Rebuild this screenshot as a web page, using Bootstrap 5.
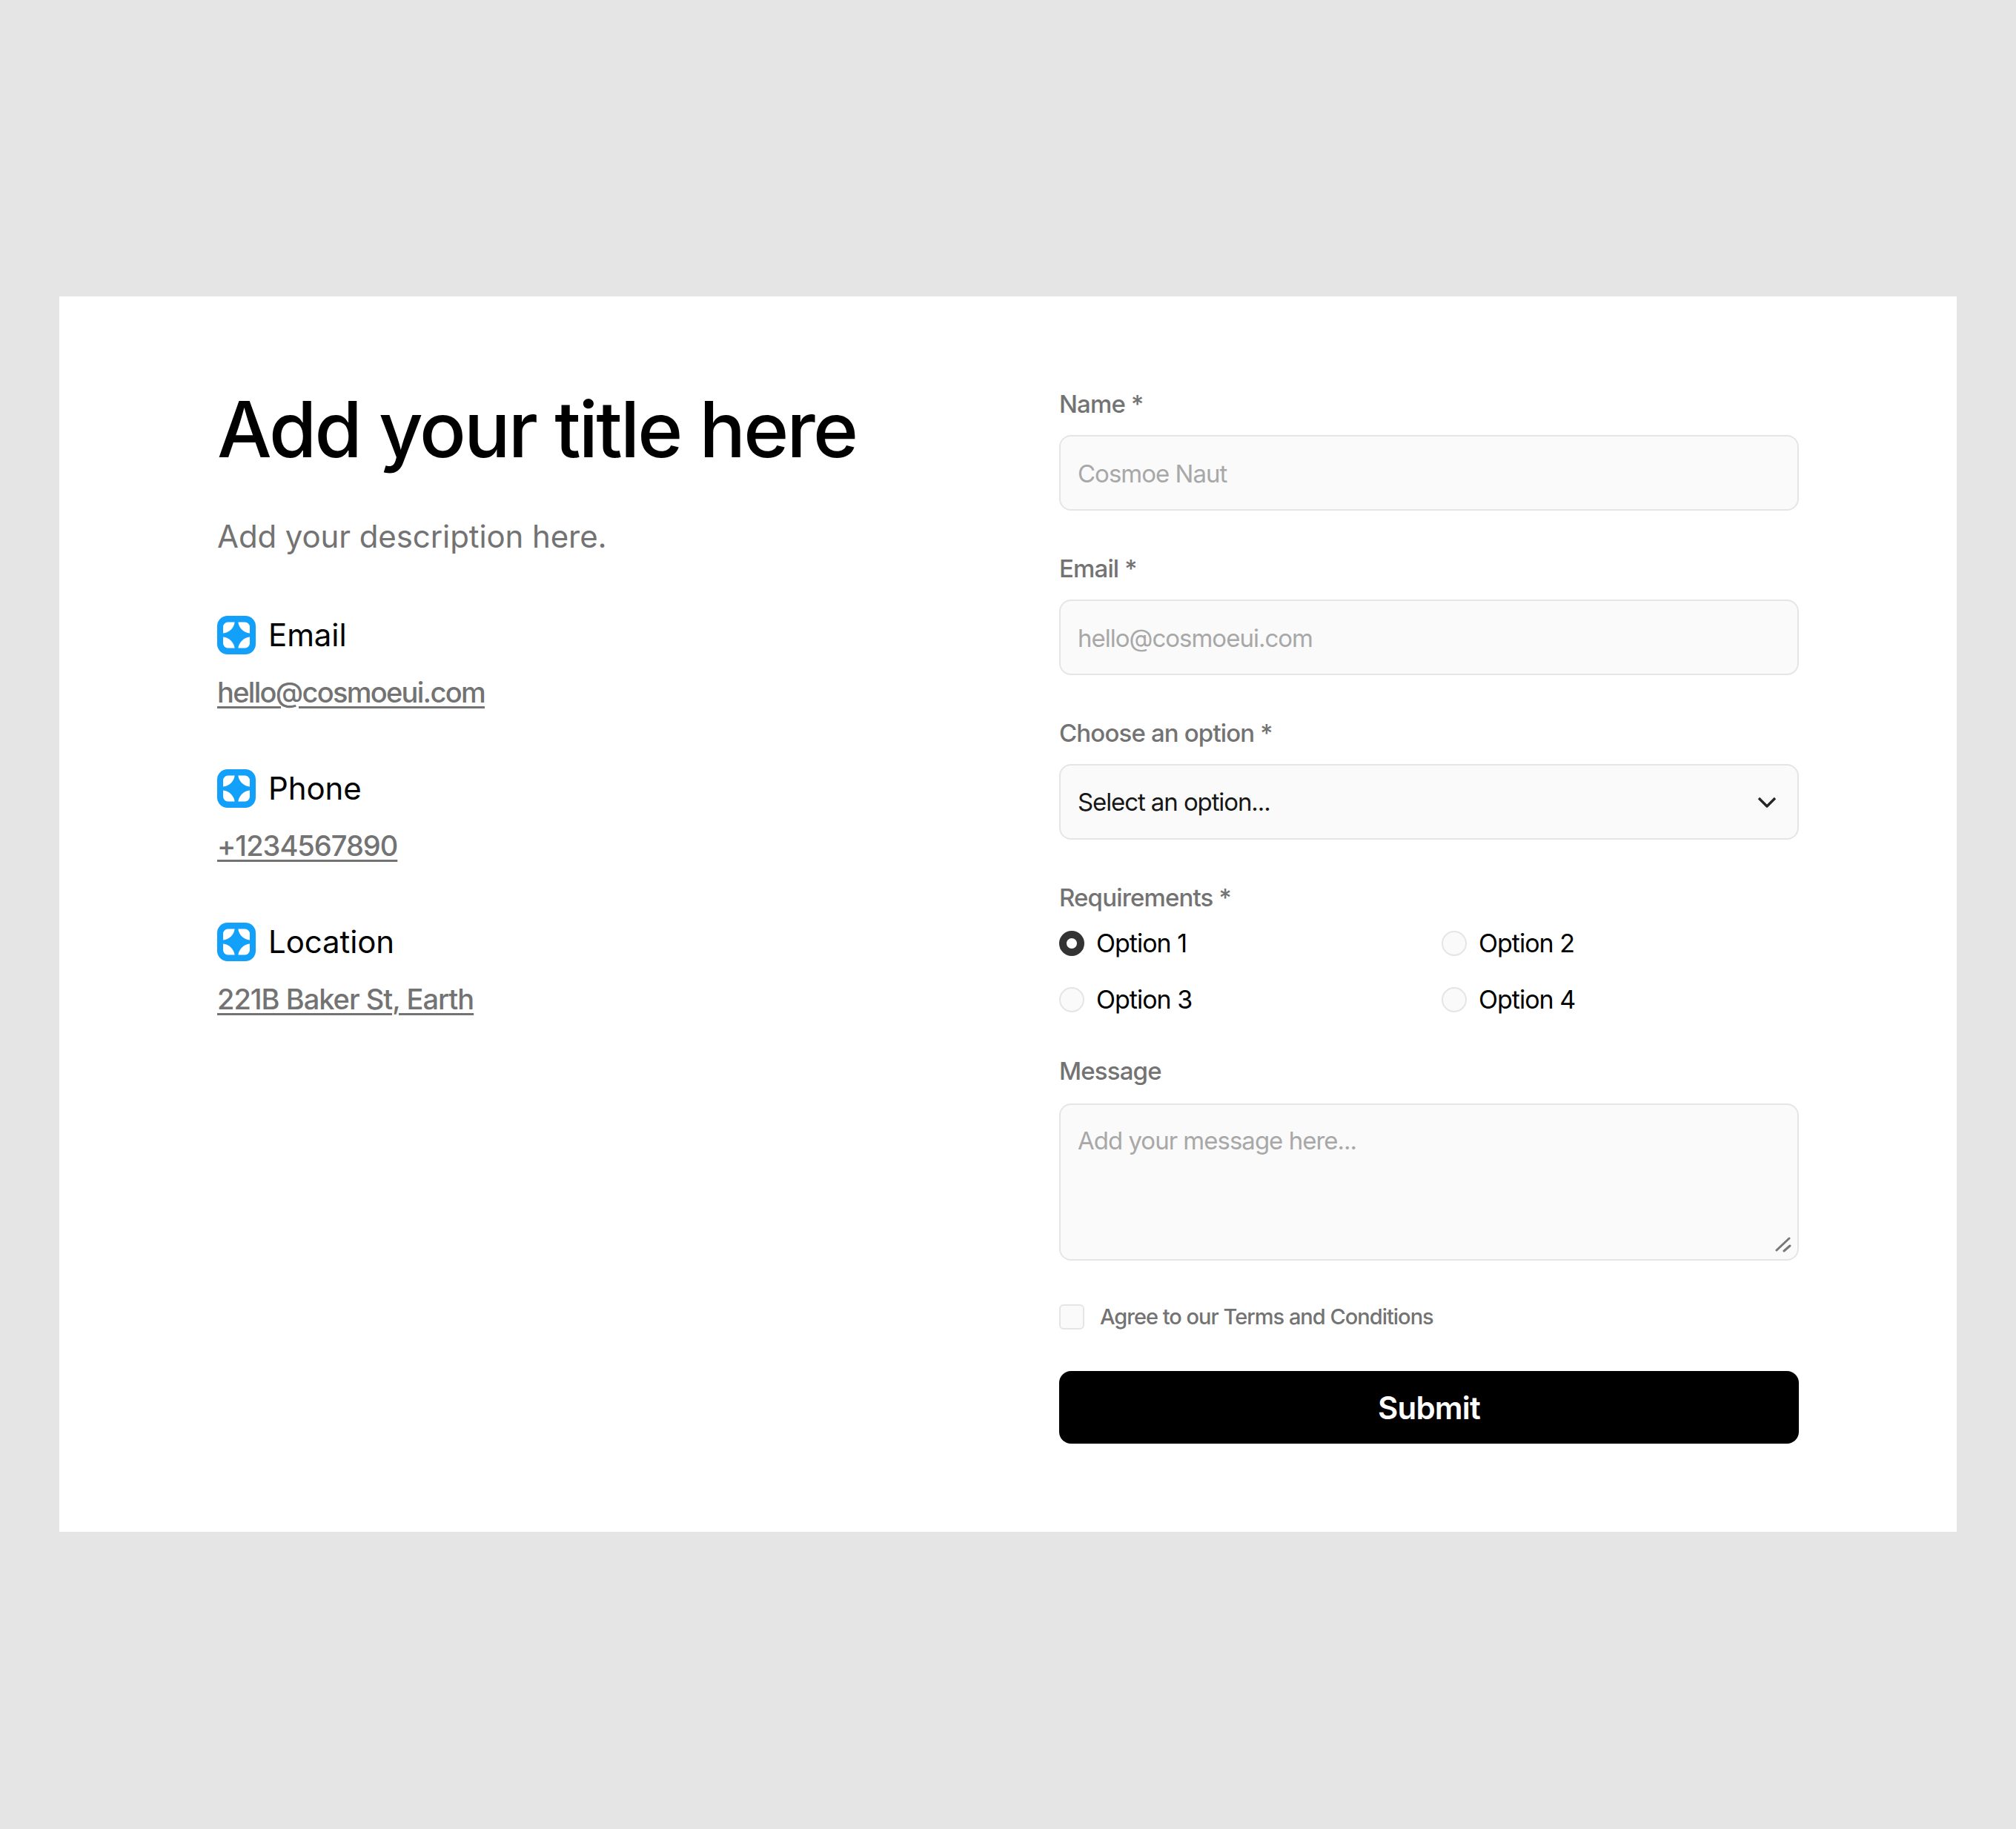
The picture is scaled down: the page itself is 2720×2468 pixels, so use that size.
<!doctype html>
<html lang="en"><head><meta charset="utf-8"><title>Contact</title>
<link href="https://cdn.jsdelivr.net/npm/bootstrap@5.3.0/dist/css/bootstrap.min.css" rel="stylesheet">
<style>
html,body{height:100%}
body{background:#e5e5e5;font-family:Inter,"Liberation Sans",sans-serif;color:#000;margin:0}
.page-wrap{height:2468px;padding:400px 80px 0}
.panel{background:#fff;height:1667px;padding:123px 213px 0 213px;display:flex}
.left-side{width:1136px;flex:none}
.right-side{width:998px;flex:none}
.big-title{font-size:104px;font-weight:500;line-height:120px;letter-spacing:-2.8px;margin:-4px 0 0}
.intro{font-size:42px;line-height:56px;color:#737373;margin:57px 0 0;letter-spacing:-.1px}
.info{margin-top:79px}
.info + .info{margin-top:78px}
.info-head{display:flex;align-items:center;gap:17px;font-size:42px;line-height:52px;letter-spacing:-.1px}
.info-head svg{width:52px;height:52px;flex:none}
.info-link{display:block;margin-top:25px;font-size:38px;font-weight:450;line-height:52px;color:#737373;text-decoration:underline;text-decoration-thickness:3px;text-underline-offset:5px;letter-spacing:-1px}
.info-link.mail-link{letter-spacing:-1.7px}
.fld{margin-bottom:56px}
.fld.req-group{margin-bottom:52px}
.fld-label{display:block;font-size:33px;font-weight:500;line-height:44px;color:#737373;margin-bottom:20px;letter-spacing:-.85px}
.fld-label.msg-label{margin-bottom:22px}
.form-control.inp,.form-select.inp{height:102px;background-color:#fafafa;border:2px solid #e5e5e5;border-radius:16px;font-size:33px;padding:2px 23px 0;color:#171717;box-shadow:none;letter-spacing:-1px}
.form-control.inp::placeholder{color:#a8a8a8}
.form-select.inp{background-size:30px;background-position:right 26px center;background-image:url("data:image/svg+xml,%3Csvg xmlns='http://www.w3.org/2000/svg' viewBox='0 0 30 30'%3E%3Cpath d='M4 10l11 11 11-11' fill='none' stroke='%23262626' stroke-width='3.4' stroke-linejoin='round'/%3E%3C/svg%3E");font-weight:400;letter-spacing:-1.1px}
textarea.form-control.inp{height:212px;padding-top:28px;line-height:40px;resize:none;background-repeat:no-repeat;background-position:right 8px bottom 8px;background-size:22px 22px;background-image:url("data:image/svg+xml,%3Csvg xmlns='http://www.w3.org/2000/svg' viewBox='0 0 22 22'%3E%3Cpath d='M2 18L19 2M12 19l8-7' fill='none' stroke='%23777' stroke-width='3' stroke-linecap='round'/%3E%3C/svg%3E")}
.opt-grid{display:grid;grid-template-columns:516px 1fr;row-gap:32px;margin-top:-2px}
.opt{display:flex;align-items:center;gap:16px;font-size:34px;line-height:44px;margin:0;letter-spacing:-1px}
.opt input.form-check-input{width:34px;height:34px;margin:0;background-color:#fafafa;border:2px solid #e5e5e5;flex:none}
.opt input.form-check-input:checked{background-color:#fff;border:10px solid #333;background-image:none}
.agree{display:flex;align-items:center;gap:21px;font-size:29px;font-weight:450;color:#737373;line-height:40px;margin:0 0 53px;letter-spacing:-1px}
.agree input.form-check-input{width:34px;height:34px;margin:0;background-color:#fafafa;border:2px solid #e5e5e5;border-radius:6px;flex:none}
.go-btn{width:100%;height:98px;background:#000;color:#fff;border:0;border-radius:16px;font-size:42px;font-weight:600;letter-spacing:-.8px}
.go-btn:hover{background:#000;color:#fff}
</style></head><body>
<svg width="0" height="0" class="d-block position-absolute"><defs>
<symbol id="mark" viewBox="0 0 52 52">
<rect width="52" height="52" rx="14" fill="#13a0fa"/>
<path fill="#fff" d="M23.6 8.5C23 16 16 23 8 23.6V15a6.5 6.5 0 0 1 6.5-6.5z"/>
<path fill="#fff" d="M28.4 8.5C29 16 36 23 44 23.6V15a6.5 6.5 0 0 0-6.5-6.5z"/>
<path fill="#fff" d="M23.6 43.5C23 36 16 29 8 28.4V37a6.5 6.5 0 0 0 6.5 6.5z"/>
<path fill="#fff" d="M28.4 43.5C29 36 36 29 44 28.4V37a6.5 6.5 0 0 1-6.5 6.5z"/>
</symbol></defs></svg>
<div class="page-wrap"><main class="panel">
<section class="left-side">
<h1 class="big-title">Add your title here</h1>
<p class="intro">Add your description here.</p>
<div class="info"><div class="info-head"><svg><use href="#mark"/></svg>Email</div><a class="info-link mail-link" href="#">hello@cosmoeui.com</a></div>
<div class="info"><div class="info-head"><svg><use href="#mark"/></svg>Phone</div><a class="info-link" href="#">+1234567890</a></div>
<div class="info"><div class="info-head"><svg><use href="#mark"/></svg>Location</div><a class="info-link" href="#">221B Baker St, Earth</a></div>
</section>
<form class="right-side">
<div class="fld"><label class="fld-label" for="n">Name *</label><input id="n" class="form-control inp" placeholder="Cosmoe Naut"></div>
<div class="fld"><label class="fld-label" for="e">Email *</label><input id="e" class="form-control inp" placeholder="hello@cosmoeui.com"></div>
<div class="fld"><label class="fld-label" for="s">Choose an option *</label><select id="s" class="form-select inp"><option>Select an option...</option></select></div>
<div class="fld req-group"><span class="fld-label">Requirements *</span>
<div class="opt-grid">
<label class="opt"><input class="form-check-input" type="radio" name="r" checked>Option 1</label>
<label class="opt"><input class="form-check-input" type="radio" name="r">Option 2</label>
<label class="opt"><input class="form-check-input" type="radio" name="r">Option 3</label>
<label class="opt"><input class="form-check-input" type="radio" name="r">Option 4</label>
</div></div>
<div class="fld"><label class="fld-label msg-label" for="m">Message</label><textarea id="m" class="form-control inp" placeholder="Add your message here..."></textarea></div>
<label class="agree"><input class="form-check-input" type="checkbox">Agree to our Terms and Conditions</label>
<button type="button" class="btn go-btn">Submit</button>
</form>
</main></div>
<script src="https://cdn.jsdelivr.net/npm/bootstrap@5.3.0/dist/js/bootstrap.bundle.min.js"></script>
</body></html>
